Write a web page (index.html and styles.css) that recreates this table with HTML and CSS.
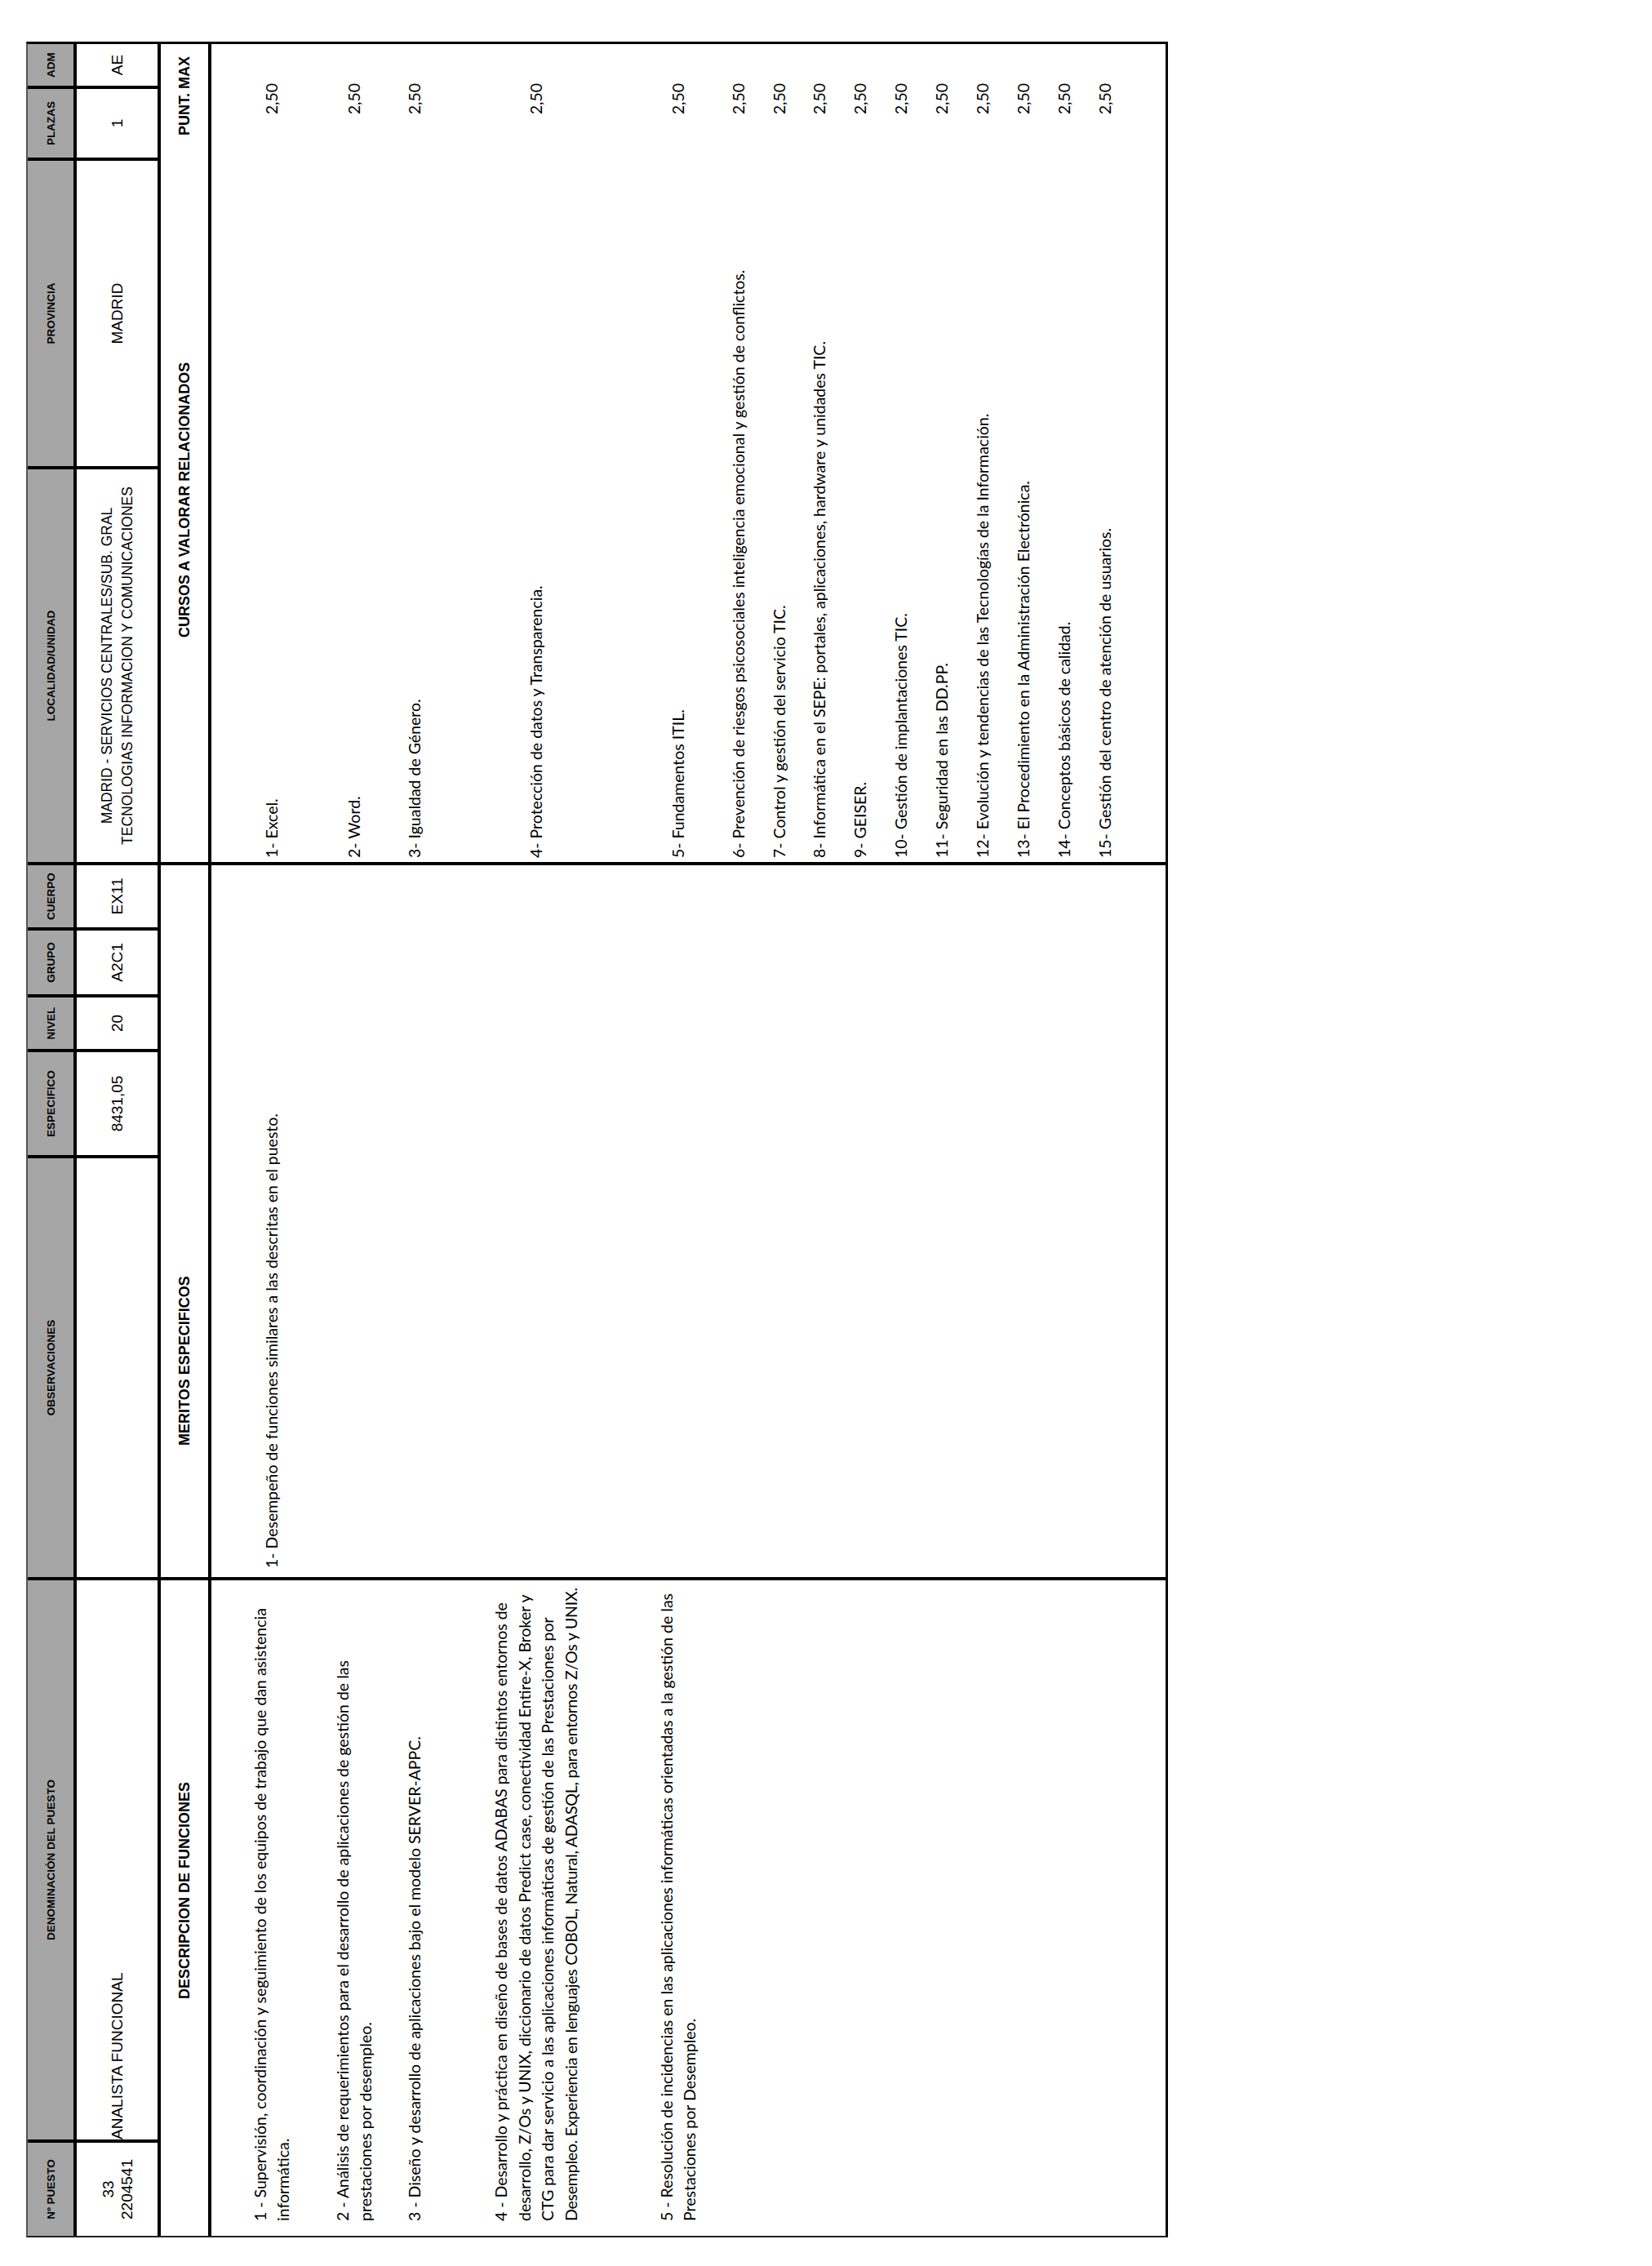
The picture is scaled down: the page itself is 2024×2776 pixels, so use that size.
FILE: index.html
```html
<!DOCTYPE html>
<html lang="es">
<head>
<meta charset="utf-8">
<title>Puesto 33 - Analista Funcional</title>
<link rel="stylesheet" href="styles.css">
</head>
<body>
<div class="page">
  <div class="sheet">
    <!-- header row -->
    <div class="h">Nº PUESTO</div>
    <div class="h">DENOMINACIÓN DEL PUESTO</div>
    <div class="h">OBSERVACIONES</div>
    <div class="h">ESPECIFICO</div>
    <div class="h">NIVEL</div>
    <div class="h">GRUPO</div>
    <div class="h">CUERPO</div>
    <div class="h">LOCALIDAD/UNIDAD</div>
    <div class="h">PROVINCIA</div>
    <div class="h">PLAZAS</div>
    <div class="h">ADM</div>

    <!-- data row -->
    <div class="d d-two">33<br>2204541</div>
    <div class="d d-left">ANALISTA FUNCIONAL</div>
    <div class="d"></div>
    <div class="d">8431,05</div>
    <div class="d">20</div>
    <div class="d">A2C1</div>
    <div class="d">EX11</div>
    <div class="d d-loc">MADRID - SERVICIOS CENTRALES/SUB. GRAL<br>TECNOLOGIAS INFORMACION Y COMUNICACIONES</div>
    <div class="d">MADRID</div>
    <div class="d">1</div>
    <div class="d">AE</div>

    <!-- section titles -->
    <div class="sec sec-desc"><span class="sec-desc-label">DESCRIPCION DE FUNCIONES</span></div>
    <div class="sec sec-mer"><span class="sec-mer-label">MERITOS ESPECIFICOS</span></div>
    <div class="sec sec-cur"><span class="sec-cur-label">CURSOS A VALORAR RELACIONADOS</span><span class="sec-punt-label">PUNT. MAX</span></div>

    <!-- content -->
    <div class="body body-desc rows">
      <div class="para">1 - Supervisión, coordinación y seguimiento de los equipos de trabajo que dan asistencia<br>informática.</div>
      <div class="para">2 - Análisis de requerimientos para el desarrollo de aplicaciones de gestión de las<br>prestaciones por desempleo.</div>
      <div class="para">3 - Diseño y desarrollo de aplicaciones bajo el modelo SERVER-APPC.</div>
      <div class="para">4 - Desarrollo y práctica en diseño de bases de datos ADABAS para distintos entornos de<br>desarrollo, Z/Os y UNIX, diccionario de datos Predict case, conectividad Entire-X, Broker y<br>CTG para dar servicio a las aplicaciones informáticas de gestión de las Prestaciones por<br><span class="tight">Desempleo. Experiencia en lenguajes COBOL, Natural, ADASQL, para entornos Z/Os y UNIX.</span></div>
      <div class="para">5 - Resolución de incidencias en las aplicaciones informáticas orientadas a la gestión de las<br>Prestaciones por Desempleo.</div>
    </div>

    <div class="body body-mer rows">
      <div class="merit">1- Desempeño de funciones similares a las descritas en el puesto.</div>
    </div>

    <div class="body body-cur rows">
      <div class="course"><span class="course-name">1- Excel.</span><span class="course-pts">2,50</span></div>
      <div class="course"><span class="course-name">2- Word.</span><span class="course-pts">2,50</span></div>
      <div class="course"><span class="course-name">3- Igualdad de Género.</span><span class="course-pts">2,50</span></div>
      <div class="course"><span class="course-name">4- Protección de datos y Transparencia.</span><span class="course-pts">2,50</span></div>
      <div class="course"><span class="course-name">5- Fundamentos ITIL.</span><span class="course-pts">2,50</span></div>
      <div class="course"><span class="course-name">6- Prevención de riesgos psicosociales inteligencia emocional y gestión de conflictos.</span><span class="course-pts">2,50</span></div>
      <div class="course"><span class="course-name">7- Control y gestión del servicio TIC.</span><span class="course-pts">2,50</span></div>
      <div class="course"><span class="course-name">8- Informática en el SEPE: portales, aplicaciones, hardware y unidades TIC.</span><span class="course-pts">2,50</span></div>
      <div class="course"><span class="course-name">9- GEISER.</span><span class="course-pts">2,50</span></div>
      <div class="course"><span class="course-name">10- Gestión de implantaciones TIC.</span><span class="course-pts">2,50</span></div>
      <div class="course"><span class="course-name">11- Seguridad en las DD.PP.</span><span class="course-pts">2,50</span></div>
      <div class="course"><span class="course-name">12- Evolución y tendencias de las Tecnologías de la Información.</span><span class="course-pts">2,50</span></div>
      <div class="course"><span class="course-name">13- El Procedimiento en la Administración Electrónica.</span><span class="course-pts">2,50</span></div>
      <div class="course"><span class="course-name">14- Conceptos básicos de calidad.</span><span class="course-pts">2,50</span></div>
      <div class="course"><span class="course-name">15- Gestión del centro de atención de usuarios.</span><span class="course-pts">2,50</span></div>
    </div>
  </div>
</div>
</body>
</html>
```
FILE: styles.css
```css
html, body {
  margin: 0;
  padding: 0;
  background: #ffffff;
}

/* Landscape sheet printed sideways: the page box is the rotated footprint */
.page {
  width: 1399px;
  height: 2690px;
  margin: 51px 0 0 32px;
  overflow: hidden;
}

.sheet {
  width: 2690px;
  height: 1399px;
  box-sizing: border-box;
  transform-origin: 0 0;
  transform: translateY(2690px) rotate(-90deg);
  display: grid;
  grid-template-columns: 114px 685px 513px 126px 63px 78px 76px 481px 374px 84px 51px;
  grid-template-rows: 56px 99px 58px 1fr;
  column-gap: 4px;
  row-gap: 4px;
  background: #000;
  border-left: 2px solid #222;
  border-top: 2px solid #555;
  border-right: 3px solid #000;
  border-bottom: 3px solid #000;
  font-family: "Liberation Sans", Arial, sans-serif;
  color: #000;
}

/* grey header cells */
.h {
  background: #a6a6a6;
  display: flex;
  align-items: center;
  justify-content: center;
  font-weight: bold;
  font-size: 13.5px;
  white-space: nowrap;
}

/* data cells */
.d {
  background: #fff;
  display: flex;
  align-items: center;
  justify-content: center;
  text-align: center;
  font-size: 19px;
  line-height: 23px;
  white-space: nowrap;
}
.d-left {
  justify-content: flex-start;
}
.d-loc {
  font-size: 17.5px;
  line-height: 25px;
}

/* section title row */
.sec {
  background: #fff;
  display: flex;
  align-items: center;
  font-weight: bold;
  font-size: 18px;
  white-space: nowrap;
}
.sec-desc { grid-column: 1 / 3; }
.sec-mer { grid-column: 3 / 8; }
.sec-cur { grid-column: 8 / 12; }
.sec-desc-label { margin-left: 290px; }
.sec-mer-label { margin-left: 161px; }
.sec-cur-label { margin-left: 275px; }
.sec-punt-label { margin-left: auto; margin-right: 15px; }

/* content area */
.body {
  background: #fff;
  font-family: "Lato", "Open Sans", sans-serif;
  font-size: 19.5px;
  line-height: 28.5px;
  white-space: nowrap;
}
.body-desc { grid-column: 1 / 3; }
.body-mer { grid-column: 3 / 8; }
.body-cur { grid-column: 8 / 12; }

.rows {
  display: grid;
  grid-template-rows: 23px 102px 100px 48px 250px 98px repeat(10, 49.9px) 1fr;
}
/* empty top band of the content rows */
.rows::before {
  content: "";
}

.para {
  align-self: center;
  padding-left: 18px;
}
.tight {
  letter-spacing: -0.22px;
}
.merit {
  align-self: center;
  padding-left: 11px;
}
.course {
  align-self: center;
  display: flex;
  align-items: center;
}
.course-name {
  padding-left: 5px;
}
.course-pts {
  margin-left: auto;
  width: 143px;
  box-sizing: border-box;
  padding-left: 9px;
  text-align: center;
}
```
